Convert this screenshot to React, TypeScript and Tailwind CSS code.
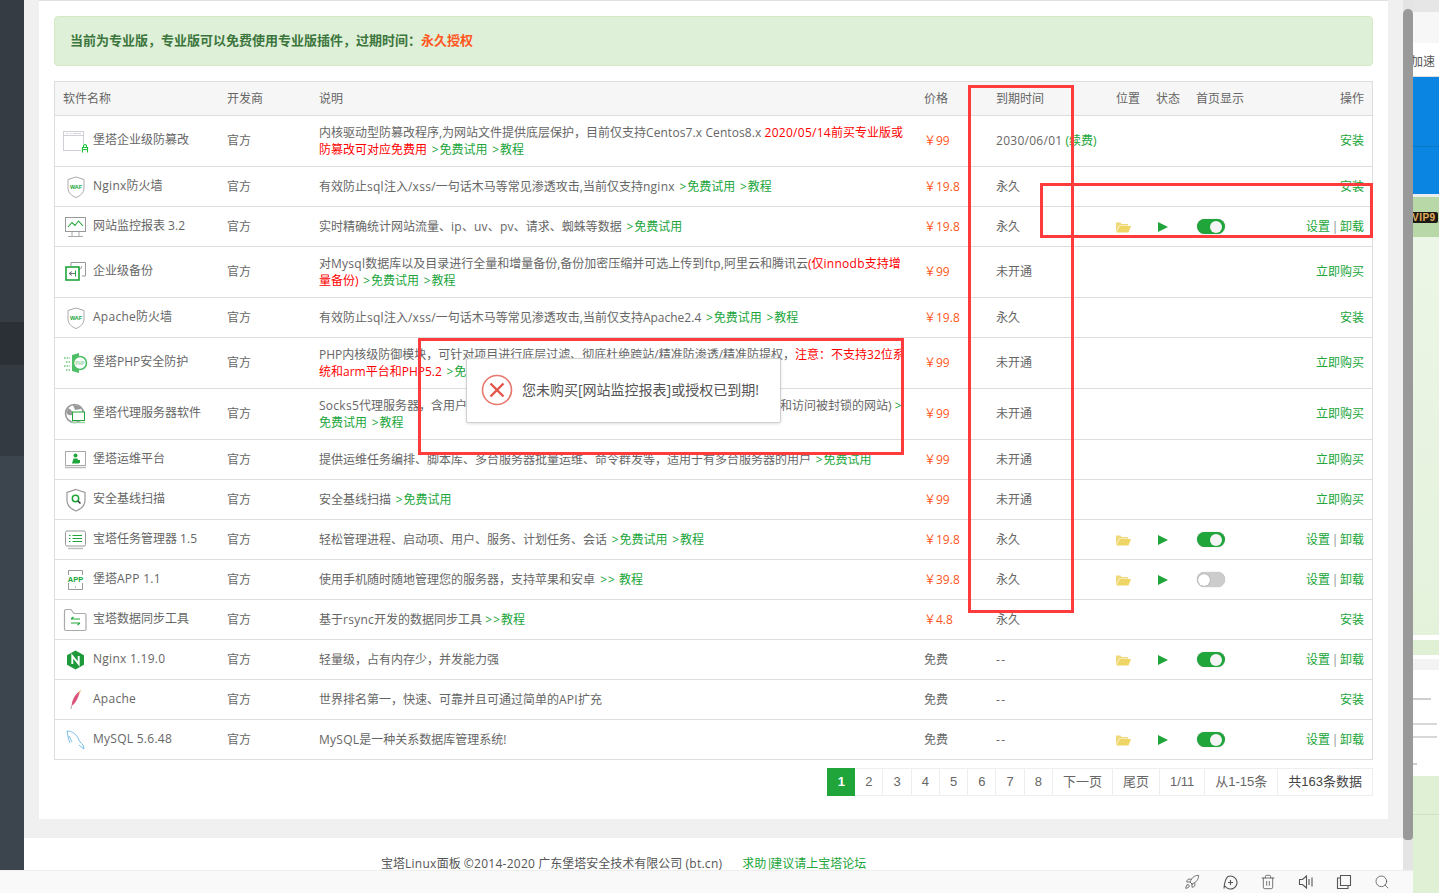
import type { ReactNode } from "react";
import { Rocket, Search, Trash2 } from "lucide-react";

// latin runs sit a little wider than the cjk text around them
const L = ({ children }: { children: ReactNode }) => <span className="tracking-[0.27px]">{children}</span>;
const Arrow = () => <span className="mr-[1px]">&gt;</span>;
const Trial = () => (
  <span className="ml-[1.5px] text-[#20a53a]">
    {" "}
    <Arrow />
    免费试用
  </span>
);
const Guide = () => (
  <span className="ml-[1.5px] text-[#20a53a]">
    {" "}
    <Arrow />
    教程
  </span>
);
const Red = ({ children }: { children: ReactNode }) => <span className="text-[#ff0000]">{children}</span>;

const WafShield = () => (
  <svg viewBox="0 0 26 24" className="h-[24px] w-[26px]">
    <path d="M13 2 L21 4.5 V13 C21 18 17 21 13 22.5 C9 21 5 18 5 13 V4.5 Z" fill="#fff" stroke="#aaa" strokeWidth="1" />
    <text x="13" y="13.5" textAnchor="middle" fontSize="5.5" fontWeight="700" fill="#20a53a" fontFamily="Liberation Sans">WAF</text>
  </svg>
);

const icons: Record<string, ReactNode> = {
  lock: (
    <svg viewBox="0 0 26 24" className="h-[24px] w-[26px]">
      <rect x="0.5" y="2.5" width="20" height="19" fill="#fff" stroke="#cfcfd8" />
      <path d="M1 6.5 H20" stroke="#cfcfd8" />
      <path d="M3 4.5 H5 M6.5 4.5 H8.5 M10 4.5 H18" stroke="#d8d8d8" />
      <rect x="18" y="15" width="8" height="9" fill="#fff" />
      <path d="M19.5 23.5 V18.5 H24.5 V23.5 M19.5 20.5 H24.5 M20.5 18.5 V16.5 Q22 14.5 23.5 16.5 V18.5" fill="none" stroke="#20c03a" strokeWidth="1.1" />
    </svg>
  ),
  waf: <WafShield />,
  monitor: (
    <svg viewBox="0 0 26 24" className="h-[24px] w-[26px]">
      <rect x="2.5" y="2.5" width="20" height="14" fill="#fff" stroke="#999" />
      <path d="M5 12 L9 7.5 L12 10.5 L15.5 6 L20 11" fill="none" stroke="#20a53a" strokeWidth="1.1" />
      <path d="M9 17 V21 M16 17 V21 M5 21.5 H20" stroke="#aaa" />
    </svg>
  ),
  backup: (
    <svg viewBox="0 0 26 24" className="h-[24px] w-[26px]">
      <path d="M8 6 V2.5 H22.5 V16 H19" fill="none" stroke="#999" />
      <path d="M17 8 L15 12 M19 6 L17.5 9" stroke="#999" />
      <rect x="3" y="7" width="13" height="13" fill="#fff" stroke="#20a53a" strokeWidth="1.6" />
      <path d="M6 13.5 H12 M6 13.5 L9 11.5 M6 13.5 L9 15.5" stroke="#777" fill="none" />
      <path d="M12.5 10.5 V16.5" stroke="#20a53a" />
    </svg>
  ),
  php: (
    <svg viewBox="0 0 26 24" className="h-[24px] w-[26px]">
      <path d="M1 7 H7 M3 11 H7 M1 15 H7 M3 19 H7" stroke="#20a53a" strokeDasharray="1.5 1.2" />
      <path d="M9 4 L16 2 V22 L9 20 Z" fill="#4fbf67" />
      <circle cx="17" cy="12" r="6.5" fill="#fff" stroke="#4fbf67" strokeWidth="1.6" />
      <text x="17" y="14" textAnchor="middle" fontSize="4.5" fontWeight="700" fill="#8fd19e" fontFamily="Liberation Sans">PHP</text>
    </svg>
  ),
  proxy: (
    <svg viewBox="0 0 26 24" className="h-[24px] w-[26px]">
      <circle cx="11.5" cy="11.5" r="9" fill="#fff" stroke="#999" strokeWidth="1.6" />
      <path d="M5 6 Q11 9 9 13 Q5 14 3.5 11 Z M10 3 Q17 3 18 7 L12 8 Z" fill="#999" />
      <rect x="9.5" y="10" width="12" height="8.5" fill="#fff" stroke="#20a53a" />
      <path d="M8 20.5 H22" stroke="#9fd6a9" strokeWidth="1.4" />
    </svg>
  ),
  ops: (
    <svg viewBox="0 0 26 24" className="h-[24px] w-[26px]">
      <rect x="2.5" y="3.5" width="20" height="14" fill="#fff" stroke="#aaa" />
      <circle cx="12.5" cy="7.5" r="2" fill="#20a53a" />
      <path d="M9 15.5 L10.5 10.5 H14.5 L16 15.5 Z M14 12 H17 V15 H14 Z" fill="#20a53a" />
      <path d="M2 19.5 H23" stroke="#bbb" strokeWidth="1.5" />
    </svg>
  ),
  scan: (
    <svg viewBox="0 0 26 24" className="h-[24px] w-[26px]">
      <path d="M13 1.5 L22 4.5 V12.5 C22 17.5 18 21 13 23 C8 21 4 17.5 4 12.5 V4.5 Z" fill="#fff" stroke="#999" strokeWidth="1.2" />
      <circle cx="12.5" cy="10.5" r="3.2" fill="none" stroke="#20a53a" strokeWidth="1.5" />
      <path d="M15 13 L17.5 15.5" stroke="#333" strokeWidth="1.5" />
    </svg>
  ),
  tasks: (
    <svg viewBox="0 0 26 24" className="h-[24px] w-[26px]">
      <rect x="2.5" y="3" width="20" height="15" rx="1.5" fill="#fff" stroke="#999" />
      <path d="M6 7.5 H7.5 M9.5 7.5 H19 M6 10.5 H7.5 M9.5 10.5 H19 M6 13.5 H7.5 M9.5 13.5 H19" stroke="#20a53a" />
      <path d="M5 20.5 H20" stroke="#bbb" strokeWidth="1.4" />
    </svg>
  ),
  app: (
    <svg viewBox="0 0 26 24" className="h-[24px] w-[26px]">
      <path d="M5.5 7 V2.5 H19.5 V7 M5.5 15 V21.5 H19.5 V15" fill="none" stroke="#999" />
      <text x="12.5" y="13.5" textAnchor="middle" fontSize="7.5" fontWeight="700" fill="#20a53a" fontFamily="Liberation Sans">APP</text>
      <path d="M12 19 H13" stroke="#888" />
    </svg>
  ),
  sync: (
    <svg viewBox="0 0 26 24" className="h-[24px] w-[26px]">
      <path d="M1.5 3.5 Q1.5 1.5 3.5 1.5 H8 L11 5.5 H21.5 Q23 5.5 23 7 V21 Q23 22.5 21.5 22.5 H3 Q1.5 22.5 1.5 21 Z" fill="#fff" stroke="#aaa" strokeWidth="1.2" />
      <path d="M8 11 H17 M8 11 L10.5 9 M8 15 H17 M17 15 L14.5 17" fill="none" stroke="#20a53a" strokeWidth="1.1" />
    </svg>
  ),
  nginx: (
    <svg viewBox="0 0 26 24" className="h-[24px] w-[26px]">
      <path d="M12.5 2.5 L21 7.3 V16.7 L12.5 21.5 L4 16.7 V7.3 Z" fill="#1f9a3a" />
      <path d="M9.3 16 V8 L15.7 16 V8" fill="none" stroke="#fff" strokeWidth="1.9" />
    </svg>
  ),
  apache: (
    <svg viewBox="0 0 26 24" className="h-[24px] w-[26px]">
      <path d="M17 3 C12 6 9 12 8.5 18 C12 16 15 11 17 3 Z" fill="#d9537a" />
      <path d="M17.5 2 L16 6" stroke="#eec36a" strokeWidth="1" />
      <path d="M8.5 18 L8 21" stroke="#a8a8a8" strokeWidth="1" />
    </svg>
  ),
  mysql: (
    <svg viewBox="0 0 26 24" className="h-[24px] w-[26px]">
      <path d="M4 3 C9 3 13 6 15 10 C16 13 18 15 20 17 L21 21 M4 3 L5.5 11 L7 15 M6 8 L9 14 M16 17 L21 21" fill="none" stroke="#5aaee0" strokeWidth="0.8" />
    </svg>
  ),
};

type Action = "install" | "buy" | "manage";

type Row = {
  icon: string;
  name: ReactNode;
  desc: ReactNode;
  price: string;
  expire: ReactNode;
  action: Action;
  tall?: boolean;
  off?: boolean;
};

const rows: Row[] = [
  {
    icon: "lock",
    name: "堡塔企业级防篡改",
    tall: true,
    desc: (
      <>
        内核驱动型防篡改程序,为网站文件提供底层保护，目前仅支持<span className="tracking-[0.1px]">Centos7.x Centos8.x</span> <Red><L>2020/05/14</L>前买专业版或</Red>
        <br />
        <Red>防篡改可对应免费用</Red>
        <Trial />
        <Guide />
      </>
    ),
    price: "￥99",
    expire: (
      <>
        <L>2030/06/01</L> <span className="text-[#20a53a]">(续费)</span>
      </>
    ),
    action: "install",
  },
  {
    icon: "waf",
    name: (
      <>
        <L>Nginx</L>防火墙
      </>
    ),
    desc: (
      <>
        有效防止<L>sql</L>注入<L>/xss/</L>一句话木马等常见渗透攻击,当前仅支持<L>nginx</L>
        <Trial />
        <Guide />
      </>
    ),
    price: "￥19.8",
    expire: "永久",
    action: "install",
  },
  {
    icon: "monitor",
    name: "网站监控报表 3.2",
    desc: (
      <>
        实时精确统计网站流量、<L>ip</L>、<L>uv</L>、<L>pv</L>、请求、蜘蛛等数据
        <Trial />
      </>
    ),
    price: "￥19.8",
    expire: "永久",
    action: "manage",
  },
  {
    icon: "backup",
    name: "企业级备份",
    tall: true,
    desc: (
      <>
        对<L>Mysql</L>数据库以及目录进行全量和增量备份,备份加密压缩并可选上传到<L>ftp</L>,阿里云和腾讯云<Red>(仅<L>innodb</L>支持增</Red>
        <br />
        <Red>量备份)</Red>
        <Trial />
        <Guide />
      </>
    ),
    price: "￥99",
    expire: "未开通",
    action: "buy",
  },
  {
    icon: "waf",
    name: (
      <>
        <L>Apache</L>防火墙
      </>
    ),
    desc: (
      <>
        有效防止<L>sql</L>注入<L>/xss/</L>一句话木马等常见渗透攻击,当前仅支持Apache2.4
        <Trial />
        <Guide />
      </>
    ),
    price: "￥19.8",
    expire: "永久",
    action: "install",
  },
  {
    icon: "php",
    name: "堡塔PHP安全防护",
    tall: true,
    desc: (
      <>
        PHP内核级防御模块，可针对项目进行底层过滤、彻底杜绝跨站/精准防渗透/精准防提权，<Red>注意：不支持32位系</Red>
        <br />
        <Red>统和arm平台和PHP5.2</Red>
        <Trial />
        <Guide />
      </>
    ),
    price: "￥99",
    expire: "未开通",
    action: "buy",
  },
  {
    icon: "proxy",
    name: "堡塔代理服务器软件",
    tall: true,
    desc: (
      <>
        <L>Socks5</L>代理服务器，含用户
        <span className="inline-block w-[313px]" />
        和访问被封锁的网站) <span className="text-[#20a53a]">&gt;</span>
        <br />
        <span className="text-[#20a53a]">免费试用</span>
        <Guide />
      </>
    ),
    price: "￥99",
    expire: "未开通",
    action: "buy",
  },
  {
    icon: "ops",
    name: "堡塔运维平台",
    desc: (
      <>
        提供运维任务编排、脚本库、多台服务器批量运维、命令群发等，适用于有多台服务器的用户
        <Trial />
      </>
    ),
    price: "￥99",
    expire: "未开通",
    action: "buy",
  },
  {
    icon: "scan",
    name: "安全基线扫描",
    desc: (
      <>
        安全基线扫描
        <Trial />
      </>
    ),
    price: "￥99",
    expire: "未开通",
    action: "buy",
  },
  {
    icon: "tasks",
    name: "宝塔任务管理器 1.5",
    desc: (
      <>
        轻松管理进程、启动项、用户、服务、计划任务、会话
        <Trial />
        <Guide />
      </>
    ),
    price: "￥19.8",
    expire: "永久",
    action: "manage",
  },
  {
    icon: "app",
    name: (
      <>
        堡塔<L>APP 1.1</L>
      </>
    ),
    desc: (
      <>
        使用手机随时随地管理您的服务器，支持苹果和安卓{" "}
        <span className="ml-[2px] text-[#20a53a]">
          <Arrow />
          <Arrow /> 教程
        </span>
      </>
    ),
    price: "￥39.8",
    expire: "永久",
    action: "manage",
    off: true,
  },
  {
    icon: "sync",
    name: "宝塔数据同步工具",
    desc: (
      <>
        基于<L>rsync</L>开发的数据同步工具{" "}
        <span className="text-[#20a53a]">
          <Arrow />
          <Arrow />
          教程
        </span>
      </>
    ),
    price: "￥4.8",
    expire: "永久",
    action: "install",
  },
  {
    icon: "nginx",
    name: <L>Nginx 1.19.0</L>,
    desc: "轻量级，占有内存少，并发能力强",
    price: "免费",
    expire: <span className="tracking-[1.5px]">--</span>,
    action: "manage",
  },
  {
    icon: "apache",
    name: <L>Apache</L>,
    desc: (
      <>
        世界排名第一，快速、可靠并且可通过简单的<L>API</L>扩充
      </>
    ),
    price: "免费",
    expire: <span className="tracking-[1.5px]">--</span>,
    action: "install",
  },
  {
    icon: "mysql",
    name: <L>MySQL 5.6.48</L>,
    desc: (
      <>
        <L>MySQL</L>是一种关系数据库管理系统!
      </>
    ),
    price: "免费",
    expire: <span className="tracking-[1.5px]">--</span>,
    action: "manage",
  },
];

const pages = ["2", "3", "4", "5", "6", "7", "8", "下一页", "尾页", "1/11", "从1-15条"];

function Folder() {
  return (
    <svg viewBox="0 0 15 12" className="h-[12px] w-[15px]">
      <path d="M0 11.5 V1.5 H4.5 L5.5 3 H12 V4.5 H3 Z" fill="#f0d878" />
      <path d="M3.5 5 H15 L12.5 11.5 H0.5 Z" fill="#efd466" />
    </svg>
  );
}

function Play() {
  return (
    <svg viewBox="0 0 10 10" className="h-[10px] w-[10px]">
      <path d="M0 0 L10 5 L0 10 Z" fill="#20a53a" />
    </svg>
  );
}

function Toggle({ off }: { off?: boolean }) {
  return off ? (
    <div className="ml-[1px] flex h-[15px] w-[28px] items-center justify-start rounded-full bg-[#cccccc] px-[1px] shadow-[0_0_1px_#999]">
      <div className="h-[12px] w-[12px] rounded-full bg-white shadow-[0_0_1px_#666]" />
    </div>
  ) : (
    <div className="ml-[1px] flex h-[15px] w-[28px] items-center justify-end rounded-full bg-[#20a53a] px-[3px] shadow-[0_0_1px_#999]">
      <div className="h-[12px] w-[12px] rounded-full bg-[#f4f4f4]" />
    </div>
  );
}

function PluginTable() {
  return (
    <div className="mt-[15px] border-x border-t border-[#dddddd]">
      <table className="w-full table-fixed border-separate border-spacing-0 text-[12px] leading-[17px] text-[#666666]">
        <colgroup>
          <col className="w-[164px]" />
          <col className="w-[92px]" />
          <col className="w-[605px]" />
          <col className="w-[72px]" />
          <col className="w-[120px]" />
          <col className="w-[40px]" />
          <col className="w-[40px]" />
          <col />
        </colgroup>
        <thead>
          <tr className="h-[34px] bg-[#f6f6f6]">
            {["软件名称", "开发商", "说明", "价格", "到期时间", "位置", "状态", "首页显示"].map((h) => (
              <th key={h} className="whitespace-nowrap border-b border-[#dddddd] px-2 text-left font-normal">
                {h}
              </th>
            ))}
            <th className="border-b border-[#dddddd] px-2 text-right font-normal">操作</th>
          </tr>
        </thead>
        <tbody>
          {rows.map((r, i) => {
            // one line cells of the two line rows sit a pixel higher
            const cell = r.tall ? "border-b border-[#dddddd] px-2 pb-[1px]" : "border-b border-[#dddddd] px-2";
            return (
              <tr key={i} className={r.tall ? "h-[51px]" : "h-[40px]"}>
                <td className="border-b border-[#dddddd] px-2">
                  <div className="flex items-center">
                    <div className="w-[30px] shrink-0">{icons[r.icon]}</div>
                    <span className="whitespace-nowrap pb-[3px]">{r.name}</span>
                  </div>
                </td>
                <td className={cell}>官方</td>
                <td className="whitespace-nowrap border-b border-[#dddddd] px-2">{r.desc}</td>
                <td className={r.price === "免费" ? cell : `${cell} text-[#ff5722]`}>{r.price}</td>
                <td className={`${cell} whitespace-nowrap`}>{r.expire}</td>
                <td className="border-b border-[#dddddd] px-2">{r.action === "manage" && <Folder />}</td>
                <td className="border-b border-[#dddddd] px-[10px]">{r.action === "manage" && <Play />}</td>
                <td className="border-b border-[#dddddd] px-2">{r.action === "manage" && <Toggle off={r.off} />}</td>
                <td className={`${cell} whitespace-nowrap text-right text-[#20a53a]`}>
                  {r.action === "install" && "安装"}
                  {r.action === "buy" && "立即购买"}
                  {r.action === "manage" && (
                    <>
                      设置<span className="inline-block w-[10px] text-center text-[#888888]">|</span>卸载
                    </>
                  )}
                </td>
              </tr>
            );
          })}
        </tbody>
      </table>
    </div>
  );
}

function Pagination() {
  return (
    <div className="mt-[8px] flex h-[28px] justify-end font-['Liberation_Sans','Noto_Sans_CJK_SC',sans-serif] text-[13px] leading-[26px] text-[#666666]">
      <span className="w-[28px] bg-[#20a53a] pt-[1px] text-center font-bold text-white">1</span>
      {pages.map((p) => (
        <span key={p} className="border-y border-r border-[#eeeeee] px-[10px]">
          {p}
        </span>
      ))}
      <span className="border-y border-r border-[#eeeeee] px-[10px] text-[#444444]">共163条数据</span>
    </div>
  );
}

function BottomBar() {
  return (
    <div className="flex h-[23px] items-center justify-end gap-[22px] border-t border-[#eeeeee] bg-[#f9f9f9] pr-[23px] text-[#555555]">
      <Rocket size={16} strokeWidth={1.2} />
      <svg viewBox="0 0 16 16" className="h-[16px] w-[16px]" fill="none" stroke="#555" strokeWidth="1.1">
        <path d="M3 12 A6.5 6.5 0 1 0 6 2.5 C4 4 2.5 7 2 14.5 M8.5 6 V11 M6 8.5 H11" />
      </svg>
      <Trash2 size={16} strokeWidth={1.2} />
      <svg viewBox="0 0 16 16" className="h-[16px] w-[16px]" fill="none" stroke="#555" strokeWidth="1.1">
        <path d="M1.5 5.5 H4.5 L8.5 2 V14 L4.5 10.5 H1.5 Z M11 5 V11 M14 3.5 V12.5" />
      </svg>
      <svg viewBox="0 0 16 16" className="h-[16px] w-[16px]" fill="none" stroke="#555" strokeWidth="1.1">
        <path d="M4.5 1.5 H14.5 V11.5 H4.5 Z M4.5 4 H1.5 V14.5 H12 V11.5" />
      </svg>
      <Search size={16} strokeWidth={1.2} />
    </div>
  );
}

function ScrollBar() {
  return (
    <div className="flex w-[10px] flex-col bg-[#e4e4e4]">
      <div className="mt-[9px] h-[831px] rounded-t-[5px] rounded-b-[4px] bg-[#999999]" />
    </div>
  );
}

// the other window peeking out at the right edge
function SideWindow() {
  return (
    <div className="flex h-[893px] w-[26px] flex-col overflow-hidden bg-[#ecf6e6]">
      <div className="h-[12px] bg-[#e6e6e6]" />
      <div className="h-[31px] bg-[#f7f7f7]" />
      <div className="-ml-[2px] h-[34px] whitespace-nowrap border-b border-[#dddddd] bg-white font-['Noto_Sans_CJK_SC',sans-serif] text-[12px] leading-[36px] text-[#555555]">
        加速
      </div>
      <div className="h-[70px] border-b border-[#0a78c8] bg-[#0a86e2]" />
      <div className="h-[47px] bg-[#0a86e2]" />
      <div className="h-[3px] bg-[#eeeeee]" />
      <div className="flex h-[40px] items-center bg-[#b8d9a7]">
        <span className="-ml-[3px] h-[11px] rounded-r-[2px] bg-[#1d1a16] pl-[2px] pr-[2px] font-['Liberation_Sans',sans-serif] text-[10px] font-bold leading-[11px] tracking-[0.5px] text-[#e0ad5c]">
          VIP9
        </span>
      </div>
      <div className="h-[398px] bg-gradient-to-b from-[#ecf6e6] to-[#e4f2dc]" />
      <div className="h-[5px] bg-white" />
      <div className="h-[15px] bg-[#dff0d5]" />
      <div className="h-[4px] bg-white" />
      <div className="h-[11px] bg-[#f3f3f3]" />
      <div className="flex h-[106px] flex-col gap-[11px] bg-white pt-[28px]">
        <div className="h-[2px] w-[18px] bg-[#cfcfcf]" />
        <div className="mt-[12px] h-[2px] w-[24px] bg-[#d8d8d8]" />
        <div className="h-[2px] w-[24px] bg-[#d8d8d8]" />
        <div className="mt-[14px] h-[2px] w-[4px] bg-[#d0d0d0]" />
      </div>
      <div className="h-[39px] border-b border-[#cfe3c2] bg-[#dff0d5]" />
      <div className="flex-1 bg-[#dff0d5]" />
    </div>
  );
}

export default function App() {
  return (
    <div className="relative flex h-[893px] w-[1439px] overflow-hidden bg-white font-['Open_Sans','Noto_Sans_CJK_SC',sans-serif]">
      <div className="flex w-[1413px] flex-col">
        <div className="flex h-[870px]">
          <div className="flex w-[24px] flex-col">
            <div className="h-[322px] bg-[#353c44]" />
            <div className="h-[43px] bg-[#2b2f36]" />
            <div className="h-[91px] bg-[#343a42]" />
            <div className="flex-1 bg-[#3c444e]" />
          </div>
          <main className="flex w-[1379px] flex-col overflow-hidden bg-[#f0f0f0]">
            <section className="mx-[15px] h-[819px] border-t border-[#e0e0e0] bg-white px-[15px] pt-[15px]">
              <div className="flex h-[50px] items-center rounded-[4px] border border-[#d6e9c6] bg-[#dff0d8] px-[15px] text-[13px] font-bold text-[#3c763d]">
                当前为专业版，专业版可以免费使用专业版插件，过期时间：<span className="text-[#ff5722]">永久授权</span>
              </div>
              <PluginTable />
              <Pagination />
            </section>
            <footer className="mt-[19px] h-[32px] overflow-hidden bg-white pl-[357px] pt-[19px] text-[12px] leading-[13px] text-[#555555]">
              宝塔<L>Linux</L>面板 <L>©2014-2020</L> 广东堡塔安全技术有限公司 <L>(bt.cn)</L>
              <span className="ml-[20px] text-[#20a53a]">
                求助<span className="inline-block w-[4px] text-center">|</span>建议请上宝塔论坛
              </span>
            </footer>
          </main>
          <ScrollBar />
        </div>
        <BottomBar />
      </div>
      <SideWindow />

      {/* error message popup */}
      <div className="absolute left-[466px] top-[358px] flex h-[65px] w-[315px] items-center rounded-[2px] border border-[#d0d0d0] bg-white pb-[2px] pl-[14px] text-[14px] text-[#555555] shadow-[0_1px_3px_rgba(0,0,0,0.12)]">
        <svg viewBox="0 0 32 32" className="mr-[9px] h-[32px] w-[32px] shrink-0">
          <circle cx="16" cy="16" r="14.5" fill="none" stroke="#e8786e" strokeWidth="1.6" />
          <path d="M9.5 9.5 L22.5 22.5 M22.5 9.5 L9.5 22.5" stroke="#e5544a" strokeWidth="2.4" />
        </svg>
        您未购买[网站监控报表]或授权已到期!
      </div>

      {/* hand drawn red boxes on the screenshot */}
      <div className="absolute left-[968px] top-[85px] h-[528px] w-[106px] border-[3px] border-[#ff3b3b]" />
      <div className="absolute left-[1040px] top-[183px] h-[55px] w-[333px] border-[3px] border-[#ff3b3b]" />
      <div className="absolute left-[418px] top-[338px] h-[117px] w-[486px] border-[3px] border-[#ff3b3b]" />
    </div>
  );
}
